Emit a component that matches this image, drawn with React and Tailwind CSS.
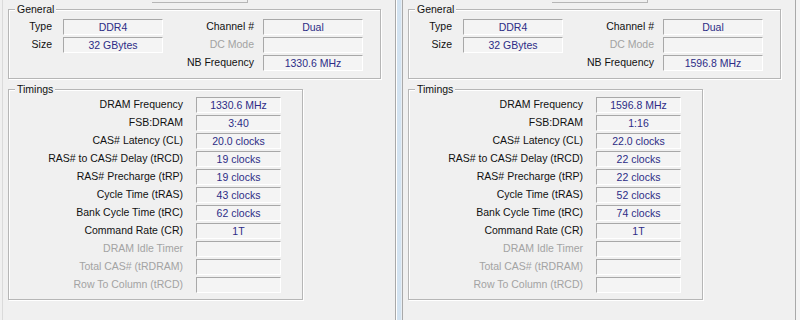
const left = {
  general: { type: "DDR4", size: "32 GBytes", channel: "Dual", nb: "1330.6 MHz" },
  timings: ["1330.6 MHz", "3:40", "20.0 clocks", "19 clocks", "19 clocks", "43 clocks", "62 clocks", "1T"],
};

const right = {
  general: { type: "DDR4", size: "32 GBytes", channel: "Dual", nb: "1596.8 MHz" },
  timings: ["1596.8 MHz", "1:16", "22.0 clocks", "22 clocks", "22 clocks", "52 clocks", "74 clocks", "1T"],
};

const timingLabels = [
  "DRAM Frequency",
  "FSB:DRAM",
  "CAS# Latency (CL)",
  "RAS# to CAS# Delay (tRCD)",
  "RAS# Precharge (tRP)",
  "Cycle Time (tRAS)",
  "Bank Cycle Time (tRC)",
  "Command Rate (CR)",
];

const disabledLabels = ["DRAM Idle Timer", "Total CAS# (tRDRAM)", "Row To Column (tRCD)"];

function Field({ value, width }) {
  return (
    <div
      className={`${width} h-[16px] flex items-center justify-center border-t border-l border-t-[#a8a8a8] border-l-[#a8a8a8] border-b border-r border-b-white border-r-white bg-[#f4f4f4] text-[#2c2c86] leading-none`}
    >
      {value}
    </div>
  );
}

function Group({ title, className, children }) {
  return (
    <div className={`relative border border-[#b6b6b6] shadow-[inset_1px_1px_0_#ffffff,1px_1px_0_#ffffff] ${className}`}>
      <span className="absolute -top-[8px] left-[6px] px-[2px] bg-[#f0f0f0] text-[#111] leading-[14px]">{title}</span>
      {children}
    </div>
  );
}

function Row({ label, labelW, gap, value, fieldW, disabled }) {
  return (
    <div className="flex items-center h-[16px]">
      <span className={`${labelW} text-right whitespace-nowrap ${disabled ? "text-[#a3a3a3]" : "text-[#111]"}`}>{label}</span>
      <div className={gap} />
      <Field value={value} width={fieldW} />
    </div>
  );
}

function Panel({ data }) {
  const g = data.general;
  return (
    <div className="flex-1 flex flex-col">
      <div className="h-[9px]">
        <div className="ml-[149px] w-[96px] h-[3px] border-b border-r border-[#b6b6b6]" />
      </div>
      <Group title="General" className="ml-[5px] w-[373px] h-[70px]">
        <div className="flex pt-[9px]">
          <div className="flex flex-col gap-[2px]">
            <Row label="Type" labelW="w-[43px]" gap="w-[11px]" value={g.type} fieldW="w-[100px]" />
            <Row label="Size" labelW="w-[43px]" gap="w-[11px]" value={g.size} fieldW="w-[100px]" />
          </div>
          <div className="flex flex-col gap-[2px]">
            <Row label="Channel #" labelW="w-[91px]" gap="w-[9px]" value={g.channel} fieldW="w-[100px]" />
            <Row label="DC Mode" labelW="w-[91px]" gap="w-[9px]" value="" fieldW="w-[100px]" disabled />
            <Row label="NB Frequency" labelW="w-[91px]" gap="w-[9px]" value={g.nb} fieldW="w-[100px]" />
          </div>
        </div>
      </Group>
      <Group title="Timings" className="ml-[5px] mt-[10px] w-[295px] h-[211px]">
        <div className="flex flex-col gap-[2px] pt-[7px]">
          {timingLabels.map((label, i) => (
            <Row key={label} label={label} labelW="w-[174px]" gap="w-[13px]" value={data.timings[i]} fieldW="w-[85px]" />
          ))}
          {disabledLabels.map((label) => (
            <Row key={label} label={label} labelW="w-[174px]" gap="w-[13px]" value="" fieldW="w-[85px]" disabled />
          ))}
        </div>
      </Group>
    </div>
  );
}

export default function App() {
  return (
    <div
      className="w-[800px] h-[320px] overflow-hidden bg-[#f0f0f0] flex text-[10.5px]"
      style={{ fontFamily: '"Liberation Sans", Arial, sans-serif' }}
    >
      {/* left window */}
      <div className="ml-[2px] w-[394px] flex border-l border-l-[#dadada] border-r border-r-[#a9a9a9]">
        <Panel data={left} />
      </div>
      {/* window frame between the two shots */}
      <div className="w-[6px] flex">
        <div className="w-[1px] bg-white" />
        <div className="w-[4px] bg-[#d3e3f1]" />
        <div className="w-[1px] bg-[#e8eef4]" />
      </div>
      {/* right window */}
      <div className="w-[394px] flex border-l border-l-[#a9a9a9] border-r border-r-[#a9a9a9]">
        <Panel data={right} />
      </div>
      <div className="flex-1 bg-[#f4f4f4]" />
    </div>
  );
}
